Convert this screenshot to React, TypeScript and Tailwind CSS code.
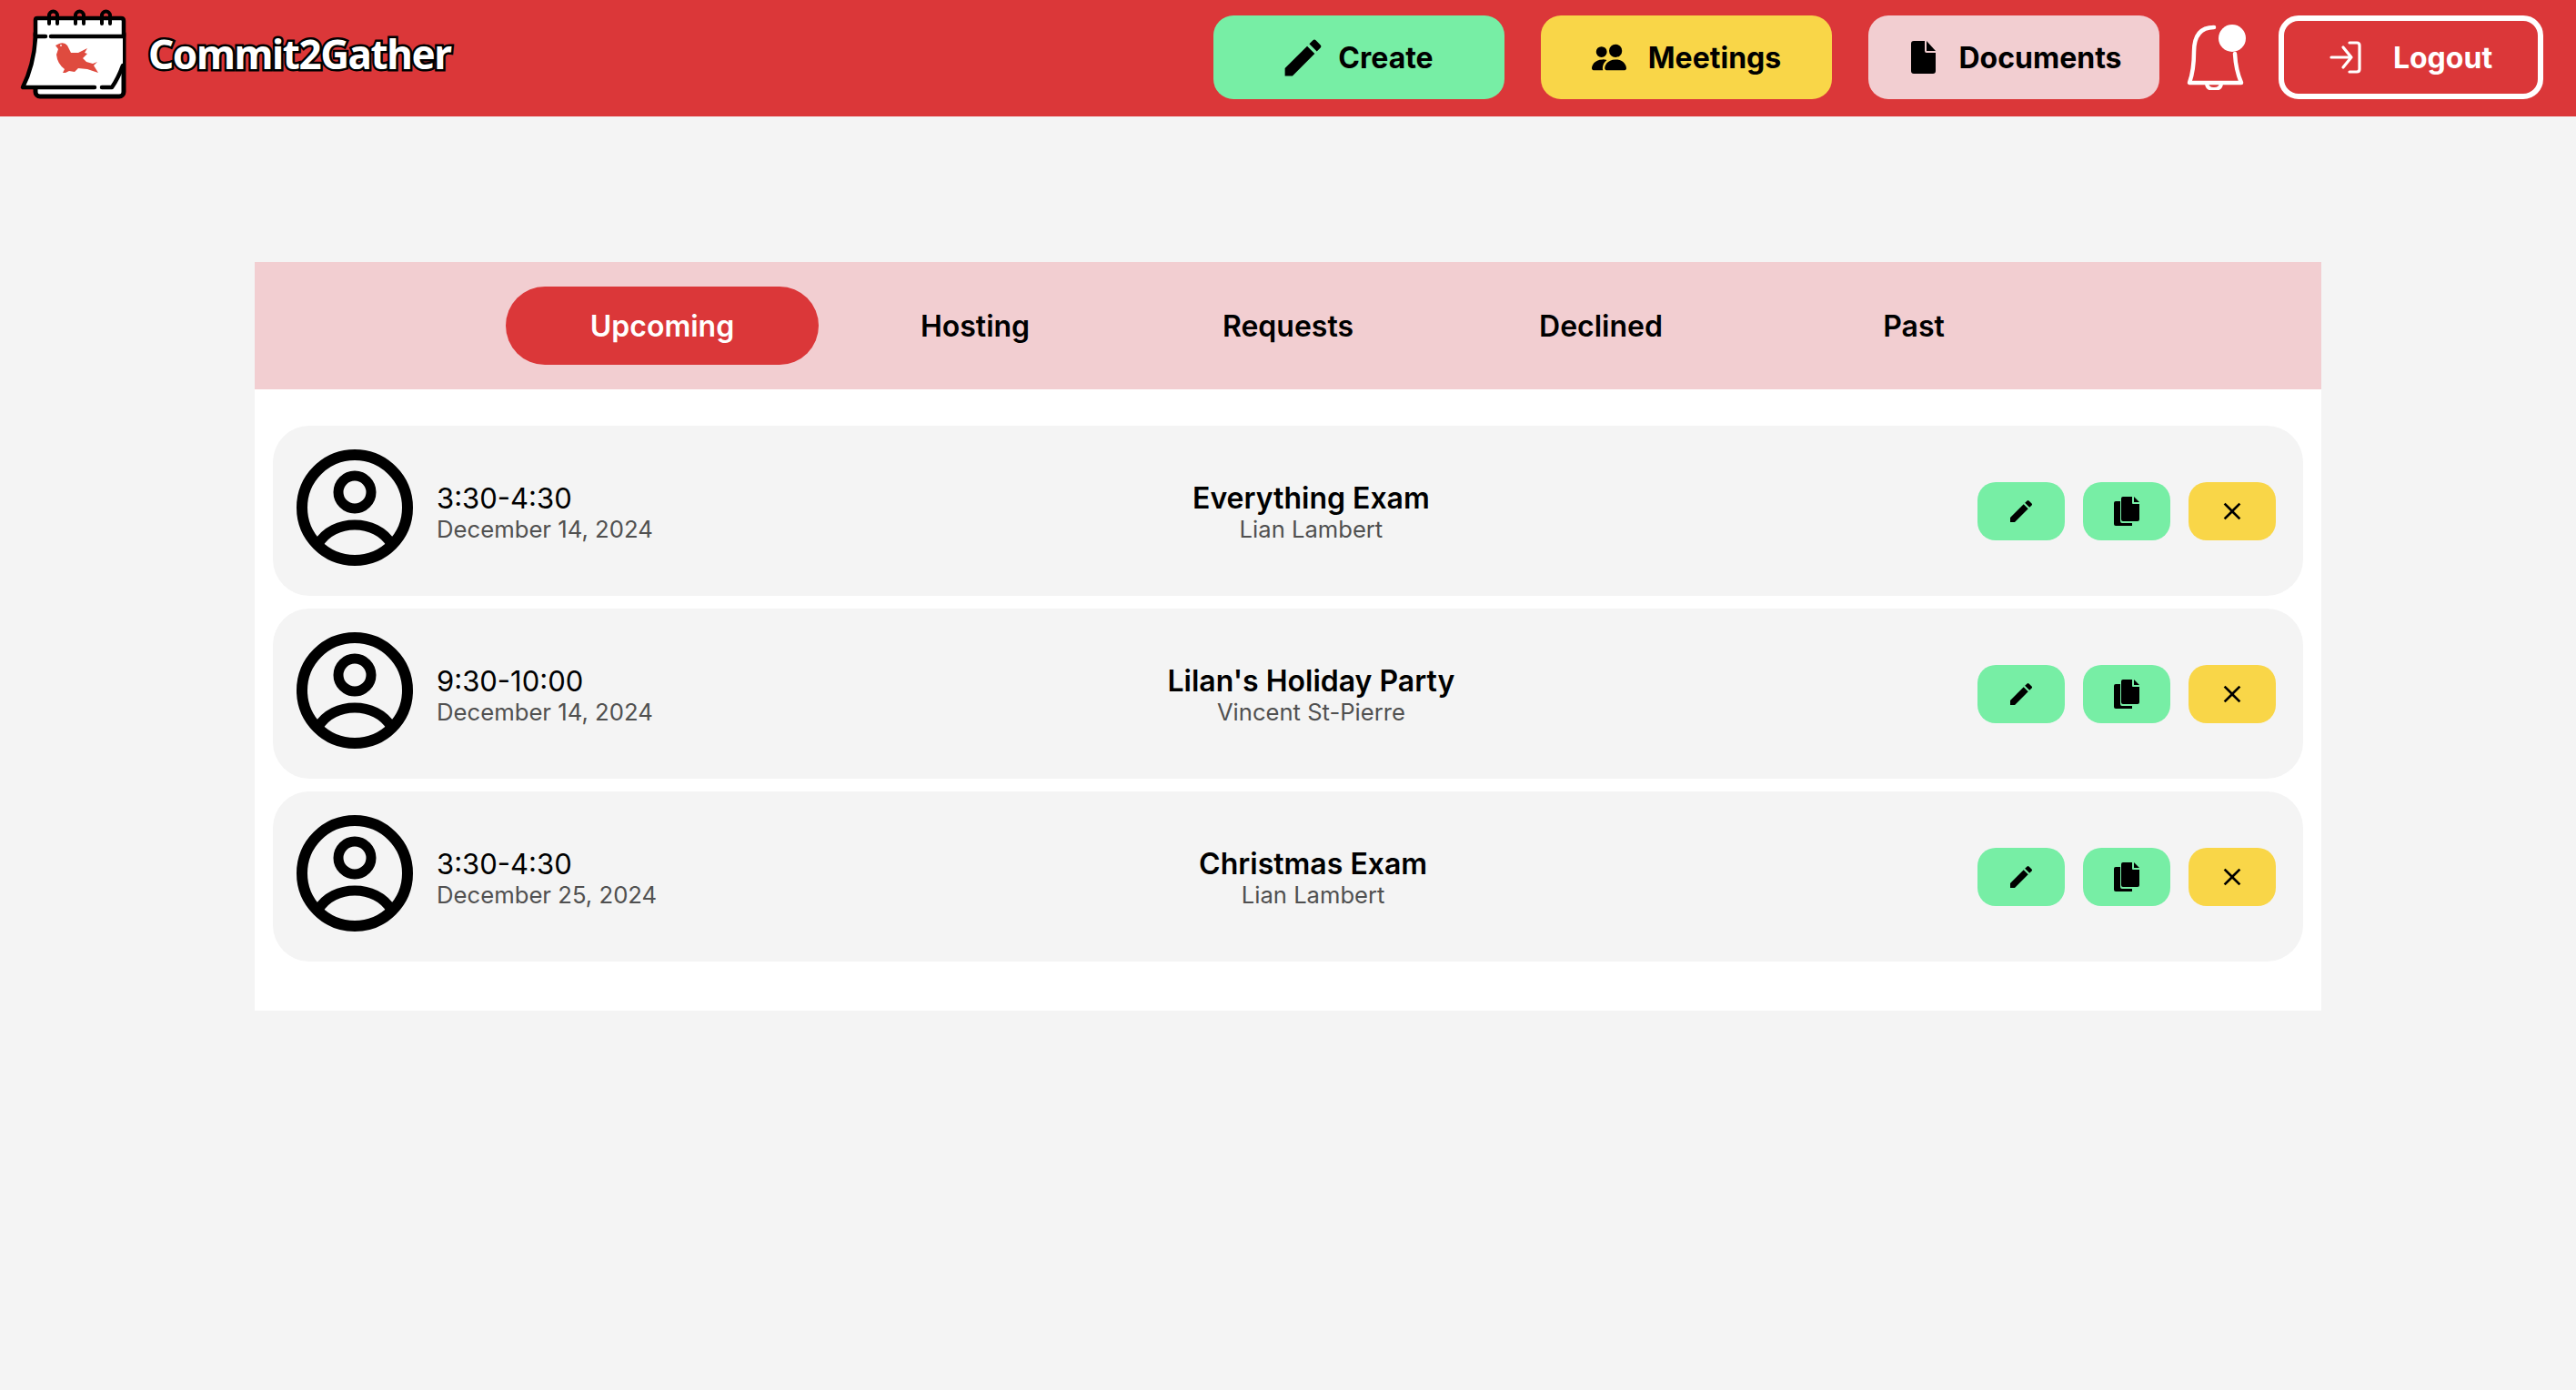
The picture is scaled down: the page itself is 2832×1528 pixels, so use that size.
import React from "react";
import { MdEdit, MdClose } from "react-icons/md";
import { BsPeopleFill } from "react-icons/bs";

const font = "font-['Inter',sans-serif]";

function Logo() {
  return (
    <svg width="130" height="112" viewBox="15 8 130 112" className="shrink-0">
      <rect x="39" y="32" width="97" height="74" rx="5" fill="#fff" stroke="#000" strokeWidth="5" />
      <path d="M40 21 H135 V72 Q130 88 124 96 H25 Q38 70 40 40 Z" fill="#fff" />
      <path d="M39 40 V22 Q39 20 41 20 H133 Q136 20 136 23 V40 M39 40 H50 M56 40 H136" fill="none" stroke="#000" strokeWidth="4.5" strokeLinecap="round" />
      <path d="M39 42 Q37 72 25 96 H104 M112 96 H123 Q130 86 135 72" fill="none" stroke="#000" strokeWidth="4.5" strokeLinecap="round" strokeLinejoin="round" />
      <path d="M54 26 V17 A4.5 4.5 0 0 1 63 17 V26 M83 26 V17 A4.5 4.5 0 0 1 92 17 V26 M112 26 V17 A4.5 4.5 0 0 1 121 17 V26" fill="none" stroke="#000" strokeWidth="4" strokeLinecap="round" />
      <path d="M61 50 L65 48 Q71 46 74 50 L78 58 L86 58 L96 53 L93 58 L96 59 L91 64 L95 68 L102 70 L107 68 L103 72 L108 80 L96 76 L86 75 L82 79 L76 78 L72 80 L69 80 L71 76 Q63 70 62 60 L64 54 Z" fill="#df4b3f" />
      <circle cx="67" cy="50" r="0.9" fill="#fff" />
    </svg>
  );
}

function DocIcon() {
  return (
    <svg width="27" height="36" viewBox="0 0 27 36" className="shrink-0 ml-[6px]">
      <path d="M3 0 H15 V11 Q15 13 17 13 H27 V33 Q27 36 24 36 H3 Q0 36 0 33 V3 Q0 0 3 0 Z" fill="#000" />
      <path d="M17 0 L27 11 H17 Z" fill="#000" />
    </svg>
  );
}

function CopyIcon() {
  return (
    <svg width="28" height="32" viewBox="0 0 28 32">
      <path d="M5 5 H20 V32 H2 Q0 32 0 30 V7 Q0 5 2 5 Z" fill="#000" />
      <path d="M9 0 H19 V8 Q19 9 20 9 H29 V26 Q29 29 26 29 H9 Q7 29 7 27 V2 Q7 0 9 0 Z" fill="#77eea5" />
      <path d="M10 0 H20 V7 Q20 8 21 8 H28 V25 Q28 27 26 27 H10 Q8 27 8 25 V2 Q8 0 10 0 Z" fill="#000" />
      <path d="M22 0 L28 6 H22 Z" fill="#000" />
    </svg>
  );
}

function LoginIcon() {
  return (
    <svg width="36" height="36" viewBox="0 0 36 36" fill="none" stroke="#fff" strokeWidth="3.2" strokeLinecap="round" strokeLinejoin="round" className="shrink-0">
      <path d="M22 2 H30 Q33 2 33 5 V31 Q33 34 30 34 H22" />
      <path d="M2 18 H24 M15 7 L24 18 L15 29" />
    </svg>
  );
}

function Bell() {
  return (
    <svg width="66" height="72" viewBox="0 0 66 72" className="shrink-0 ml-[30px] mr-[35px]" fill="none">
      <path d="M30 3 Q8 3 8 30 Q8 50 3 64 H60 Q54 50 53 32" stroke="#fff" strokeWidth="4.5" strokeLinecap="round" strokeLinejoin="round" />
      <path d="M22 64 Q22 71 30 71 Q38 71 38 64" stroke="#fff" strokeWidth="4" />
      <circle cx="50" cy="15" r="15" fill="#fff" />
    </svg>
  );
}

function Avatar() {
  return (
    <svg width="128" height="128" viewBox="0 0 128 128" fill="none" stroke="#000" strokeWidth="12" className="shrink-0">
      <circle cx="64" cy="64" r="58" />
      <circle cx="64" cy="47" r="18" strokeWidth="11" />
      <path d="M24 104 C32 90 48 83 64 83 C80 83 96 90 104 104" strokeWidth="11" />
    </svg>
  );
}

function NavButton({ className, icon, label, gap }: { className: string; icon: React.ReactNode; label: string; gap: string }) {
  return (
    <div className={`w-[320px] h-[92px] rounded-[22px] flex items-center justify-center ${gap} ${className}`}>
      {icon}
      <span className="text-[32px] font-bold text-black pt-[1px]">{label}</span>
    </div>
  );
}

const rows = [
  { time: "3:30-4:30", date: "December 14, 2024", title: "Everything Exam", who: "Lian Lambert" },
  { time: "9:30-10:00", date: "December 14, 2024", title: "Lilan's Holiday Party", who: "Vincent St-Pierre" },
  { time: "3:30-4:30", date: "December 25, 2024", title: "Christmas Exam", who: "Lian Lambert" },
];

const tabs = ["Upcoming", "Hosting", "Requests", "Declined", "Past"];

export default function App() {
  return (
    <div className={`min-h-screen bg-[#f4f4f4] ${font}`}>
      <header className="h-[128px] bg-[#db3739] flex items-center pl-[15px] pr-[36px]">
        <Logo />
        <span className="ml-[18px] text-[44px] tracking-[-1.4px] leading-none font-bold text-white font-['Noto_Sans',sans-serif] [-webkit-text-stroke:5px_#000] [paint-order:stroke_fill] -mt-[10px]">
          Commit2Gather
        </span>
        <div className="ml-auto flex items-center -mt-[2px]">
          <div className="flex items-center gap-[40px]">
            <NavButton className="bg-[#77eea5]" gap="gap-[18px]" label="Create" icon={<MdEdit size={53} className="text-black shrink-0 -mx-[6px]" />} />
            <NavButton className="bg-[#f9d648]" gap="gap-[24px]" label="Meetings" icon={<BsPeopleFill size={38} className="text-black shrink-0" />} />
            <NavButton className="bg-[#f2ced1]" gap="gap-[25px]" label="Documents" icon={<DocIcon />} />
          </div>
          <Bell />
          <div className="w-[291px] h-[92px] rounded-[22px] border-[6px] border-white flex items-center justify-center gap-[34px]">
            <LoginIcon />
            <span className="text-[32px] font-bold text-white pt-[1px]">Logout</span>
          </div>
        </div>
      </header>

      <main className="mx-[280px] mt-[160px] bg-white pb-[54px]">
        <div className="h-[140px] bg-[#f2ced1] flex items-center pl-[276px] pb-[1px]">
          {tabs.map((t, i) => (
            <div
              key={t}
              className={`w-[344px] h-[86px] rounded-[43px] flex items-center justify-center pt-[3px] text-[32px] font-semibold ${i === 0 ? "bg-[#db3739] text-white" : "text-black"}`}
            >
              {t}
            </div>
          ))}
        </div>
        <div className="pt-[40px] px-[20px] flex flex-col gap-[14px]">
          {rows.map((r) => (
            <div key={r.title} className="h-[187px] rounded-[40px] bg-[#f4f4f4] flex items-center justify-between pl-[26px] pr-[30px]">
              <div className="flex items-center gap-[26px] -mt-[8px]">
                <Avatar />
                <div className="flex flex-col pt-[13px]">
                  <span className="text-[31px] leading-[36px] text-black">{r.time}</span>
                  <span className="text-[25.7px] leading-[32px] text-[#505050]">{r.date}</span>
                </div>
              </div>
              <div className="flex flex-col items-center pt-[5px] -ml-[9px]">
                <span className="text-[32px] leading-[36px] font-semibold text-black">{r.title}</span>
                <span className="text-[25.6px] leading-[32px] text-[#505050]">{r.who}</span>
              </div>
              <div className="flex items-center gap-[20px]">
                <div className="w-[96px] h-[64px] rounded-[20px] bg-[#77eea5] flex items-center justify-center">
                  <MdEdit size={32} className="text-black" />
                </div>
                <div className="w-[96px] h-[64px] rounded-[20px] bg-[#77eea5] flex items-center justify-center">
                  <CopyIcon />
                </div>
                <div className="w-[96px] h-[64px] rounded-[20px] bg-[#f9d648] flex items-center justify-center">
                  <MdClose size={32} className="text-black" />
                </div>
              </div>
            </div>
          ))}
        </div>
      </main>
    </div>
  );
}
